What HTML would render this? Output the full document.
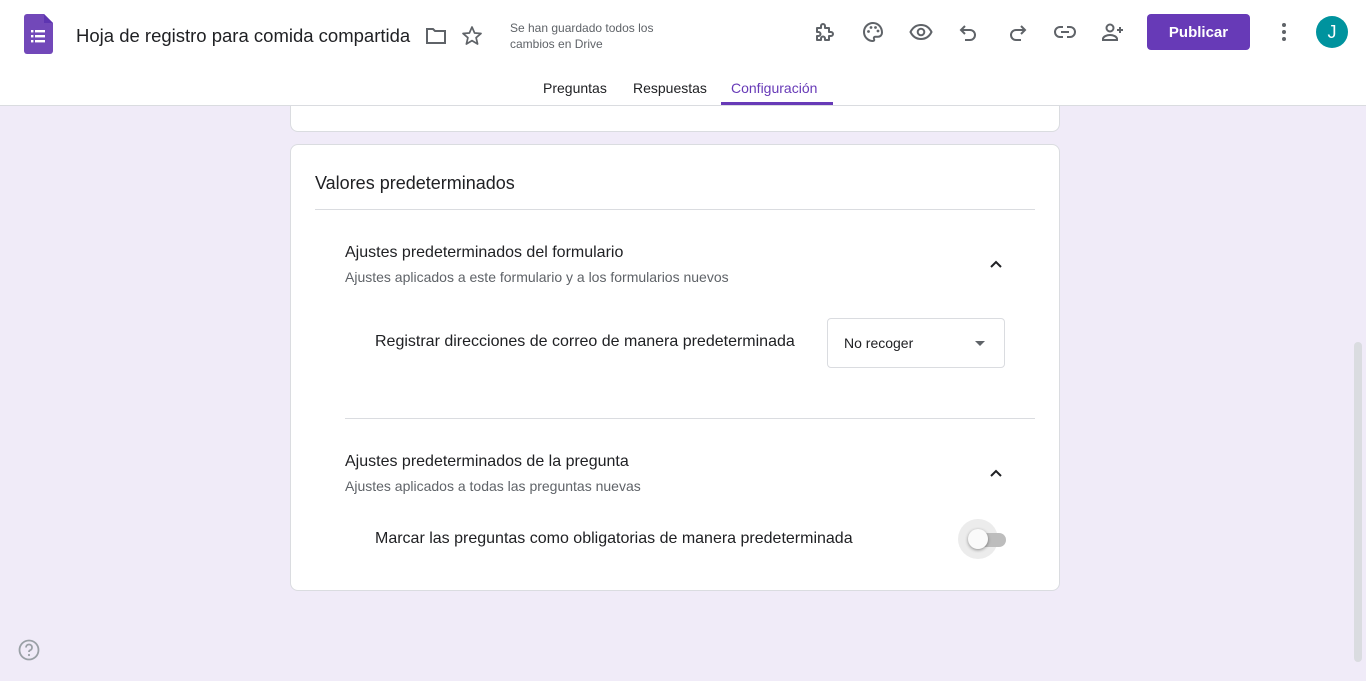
<!DOCTYPE html>
<html><head><meta charset="utf-8"><style>
*{box-sizing:border-box;margin:0;padding:0}
body{width:1366px;height:681px;overflow:hidden;background:#f0ebf8;font-family:"Liberation Sans",Arial,sans-serif;position:relative;color:#202124}
.hdr{position:absolute;left:0;top:0;width:1366px;height:106px;background:#fff;border-bottom:1px solid #dadce0;z-index:5}
.abs{position:absolute}
.ic{position:absolute;top:20px;width:24px;height:24px}
.card{position:absolute;background:#fff;border:1px solid #dadce0;border-radius:8px}
.t16{font-size:16px}
</style></head><body>
<div class="hdr">
 <svg class="abs" style="left:24px;top:14px" width="29" height="40" viewBox="0 0 29 40"><path d="M3 0h17l9 9v28a3 3 0 0 1-3 3H3a3 3 0 0 1-3-3V3a3 3 0 0 1 3-3z" fill="#7248b9"/><path d="M20 0l9 9h-9z" fill="#5e35b1"/><g fill="#fff"><rect x="7" y="16" width="2.4" height="2.4"/><rect x="11" y="16" width="10" height="2.4"/><rect x="7" y="21" width="2.4" height="2.4"/><rect x="11" y="21" width="10" height="2.4"/><rect x="7" y="26" width="2.4" height="2.4"/><rect x="11" y="26" width="10" height="2.4"/></g></svg>
 <div class="abs" style="left:76px;top:25px;font-size:18.5px;color:#202124">Hoja de registro para comida compartida</div>
 <svg class="ic" style="left:424px;top:24px" width="24" height="24" viewBox="0 0 24 24"><path d="M3 5h6l2 2h10v12H3z" fill="none" stroke="#5f6368" stroke-width="2"/></svg>
 <svg class="ic" style="left:460px;top:24px" viewBox="0 0 24 24"><path d="M12 3l2.6 6 6.4.5-4.9 4.2 1.5 6.3L12 16.6 6.4 20l1.5-6.3L3 9.5 9.4 9z" fill="none" stroke="#5f6368" stroke-width="1.7" stroke-linejoin="round"/></svg>
 <div class="abs" style="left:510px;top:20px;font-size:12px;color:#5f6368;line-height:16px">Se han guardado todos los<br>cambios en Drive</div>
 <svg class="ic" style="left:813px" viewBox="0 0 24 24"><path d="M4 8h4V6a2 2 0 0 1 4 0v2h4v4h2a2 2 0 0 1 0 4h-2v4h-4v-1.5a2 2 0 0 0-4 0V20H4v-4h1.5a2 2 0 0 0 0-4H4z" fill="none" stroke="#5f6368" stroke-width="2" stroke-linejoin="round"/></svg>
 <svg class="ic" style="left:861px" viewBox="0 0 24 24"><path d="M12 3a9 9 0 0 0 0 18c1.2 0 1.6-1 1-2-.6-1 0-2.2 1.3-2.2H17a4 4 0 0 0 4-4C21 7 17 3 12 3z" fill="none" stroke="#5f6368" stroke-width="2"/><circle cx="7.5" cy="11.5" r="1.4" fill="#5f6368"/><circle cx="10" cy="7.5" r="1.4" fill="#5f6368"/><circle cx="14.5" cy="7.5" r="1.4" fill="#5f6368"/><circle cx="17" cy="11" r="1.4" fill="#5f6368"/></svg>
 <svg class="ic" style="left:909px" viewBox="0 0 24 24"><path d="M1.5 12C4 7 8 5 12 5s8 2 10.5 7C20 17 16 19 12 19s-8-2-10.5-7z" fill="none" stroke="#5f6368" stroke-width="2"/><circle cx="12" cy="12" r="3.3" fill="none" stroke="#5f6368" stroke-width="2"/></svg>
 <svg class="ic" style="left:957px" viewBox="0 0 24 24"><path d="M8 6L4 10l4 4M4 10h9a5 5 0 0 1 0 10h-5" fill="none" stroke="#5f6368" stroke-width="2"/></svg>
 <svg class="ic" style="left:1005px" viewBox="0 0 24 24"><path d="M16 6l4 4-4 4M20 10h-9a5 5 0 0 0 0 10h5" fill="none" stroke="#5f6368" stroke-width="2"/></svg>
 <svg class="ic" style="left:1053px" viewBox="0 0 24 24"><path d="M10 7H7a5 5 0 0 0 0 10h3M14 7h3a5 5 0 0 1 0 10h-3M8 12h8" fill="none" stroke="#5f6368" stroke-width="2"/></svg>
 <svg class="ic" style="left:1101px" viewBox="0 0 24 24"><circle cx="9" cy="8" r="3.5" fill="none" stroke="#5f6368" stroke-width="2"/><path d="M2 20v-1c0-2.5 4-4 7-4s7 1.5 7 4v1z" fill="none" stroke="#5f6368" stroke-width="2"/><path d="M19 7v6M16 10h6" stroke="#5f6368" stroke-width="2"/></svg>
 <div class="abs" style="left:1147px;top:14px;width:103px;height:36px;background:#673ab7;border-radius:4px;color:#fff;font-size:15px;font-weight:bold;text-align:center;line-height:37px">Publicar</div>
 <svg class="ic" style="left:1272px" viewBox="0 0 24 24"><circle cx="12" cy="5" r="2" fill="#5f6368"/><circle cx="12" cy="12" r="2" fill="#5f6368"/><circle cx="12" cy="19" r="2" fill="#5f6368"/></svg>
 <div class="abs" style="left:1316px;top:16px;width:32px;height:32px;border-radius:50%;background:#00939e;color:#fff;font-size:18px;text-align:center;line-height:32px">J</div>
 <div class="abs" style="left:543px;top:80px;font-size:14px;color:#202124">Preguntas</div>
 <div class="abs" style="left:633px;top:80px;font-size:14px;color:#202124">Respuestas</div>
 <div class="abs" style="left:731px;top:80px;font-size:14px;color:#673ab7">Configuración</div>
 <div class="abs" style="left:721px;top:102px;width:112px;height:3px;background:#673ab7"></div>
</div>
<div class="card" style="left:290px;top:90px;width:770px;height:42px;border-top:none;border-radius:0 0 8px 8px"></div>
<div class="card" style="left:290px;top:144px;width:770px;height:447px">
 <div class="abs t16" style="left:24px;top:28px;font-size:18px">Valores predeterminados</div>
 <div class="abs" style="left:24px;top:64px;width:720px;height:1px;background:#dadce0"></div>
 <div class="abs t16" style="left:54px;top:99px">Ajustes predeterminados del formulario</div>
 <div class="abs" style="left:54px;top:124px;font-size:14px;color:#5f6368">Ajustes aplicados a este formulario y a los formularios nuevos</div>
 <svg class="abs" style="left:697px;top:112px" width="16" height="16" viewBox="0 0 16 16"><path d="M3 10l5-5 5 5" fill="none" stroke="#202124" stroke-width="2"/></svg>
 <div class="abs t16" style="left:84px;top:188px">Registrar direcciones de correo de manera predeterminada</div>
 <div class="abs" style="left:536px;top:173px;width:178px;height:50px;border:1px solid #dadce0;border-radius:4px">
  <div class="abs" style="left:16px;top:16px;font-size:14px">No recoger</div>
  <div class="abs" style="left:147px;top:22px;width:0;height:0;border-left:5px solid transparent;border-right:5px solid transparent;border-top:5px solid #5f6368"></div>
 </div>
 <div class="abs" style="left:54px;top:273px;width:690px;height:1px;background:#dadce0"></div>
 <div class="abs t16" style="left:54px;top:308px">Ajustes predeterminados de la pregunta</div>
 <div class="abs" style="left:54px;top:333px;font-size:14px;color:#5f6368">Ajustes aplicados a todas las preguntas nuevas</div>
 <svg class="abs" style="left:697px;top:321px" width="16" height="16" viewBox="0 0 16 16"><path d="M3 10l5-5 5 5" fill="none" stroke="#202124" stroke-width="2"/></svg>
 <div class="abs t16" style="left:84px;top:385px">Marcar las preguntas como obligatorias de manera predeterminada</div>
 <div class="abs" style="left:667px;top:374px;width:40px;height:40px;border-radius:50%;background:#ececec"></div>
 <div class="abs" style="left:680px;top:388px;width:35px;height:14px;border-radius:7px;background:#bdbdbd"></div>
 <div class="abs" style="left:677px;top:384px;width:20px;height:20px;border-radius:50%;background:#fafafa;box-shadow:0 1px 3px rgba(0,0,0,.4)"></div>
</div>
<svg class="abs" style="left:18px;top:639px" width="22" height="22" viewBox="0 0 22 22"><circle cx="11" cy="11" r="9.5" fill="none" stroke="#9aa0a6" stroke-width="1.8"/><path d="M8 8.5a3 3 0 1 1 4 2.8c-.8.4-1 .9-1 1.7" fill="none" stroke="#9aa0a6" stroke-width="1.8"/><circle cx="11" cy="16" r="1.1" fill="#9aa0a6"/></svg>
<div class="abs" style="left:1354px;top:342px;width:8px;height:320px;border-radius:4px;background:#dadce0"></div>
</body></html>
